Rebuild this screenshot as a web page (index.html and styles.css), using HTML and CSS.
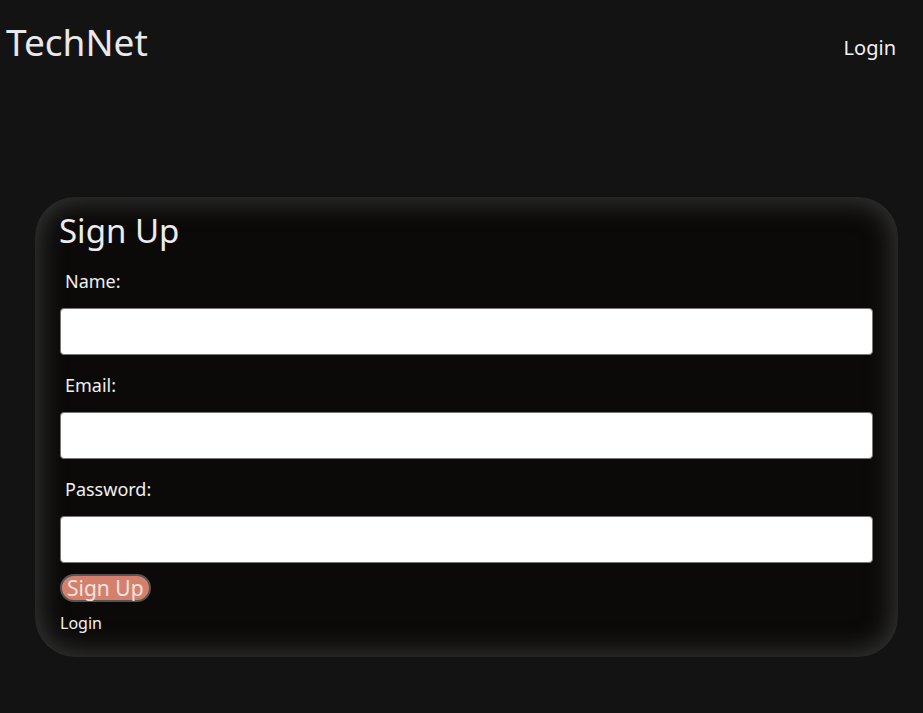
FILE: index.html
```html
<!DOCTYPE html>
<html>
<head>
<meta charset="utf-8">
<link rel="stylesheet" href="styles.css">
</head>
<body>
<header class="topbar">
  <div class="brand">TechNet</div>
  <nav class="nav"><a class="nav-link" href="#">Login</a></nav>
</header>
<main class="main">
  <form class="card">
    <h1 class="card-title">Sign Up</h1>
    <label class="field-label">Name:</label>
    <input class="field-input" type="text">
    <label class="field-label">Email:</label>
    <input class="field-input" type="email">
    <label class="field-label">Password:</label>
    <input class="field-input" type="password">
    <button class="submit" type="button">Sign Up</button>
    <a class="alt-link" href="#">Login</a>
  </form>
</main>
</body>
</html>
```
FILE: styles.css
```css
html, body {
  margin: 0;
  padding: 0;
  background: #131313;
  font-family: "Noto Sans", sans-serif;
  color: #ececec;
}
.topbar {
  display: flex;
  justify-content: space-between;
  align-items: flex-start;
  height: 197px;
}
.brand {
  font-size: 37px;
  line-height: 1;
  color: #e8e8ec;
  padding: 23px 0 0 6px;
}
.nav {
  padding: 34px 27px 0 0;
}
.nav-link {
  color: #f2f2f2;
  text-decoration: none;
  font-size: 20px;
}
.main {
  padding: 0 25px 0 35px;
}
.card {
  display: flex;
  flex-direction: column;
  align-items: flex-start;
  background: #0b0a09;
  border-radius: 40px;
  box-shadow: inset 0 0 26px 5px rgba(64, 64, 64, 0.8);
  padding: 14px 25px 0 25px;
  height: 460px;
  box-sizing: border-box;
}
.card > * {
  flex-shrink: 0;
}
.card-title {
  margin: 0 0 0 -1px;
  font-weight: normal;
  font-size: 33px;
  line-height: 40px;
  color: #ececf0;
}
.field-label {
  font-size: 18px;
  line-height: 22px;
  margin: 19px 0 0 5px;
  color: #f0f0f0;
}
.field-input {
  align-self: stretch;
  height: 47px;
  box-sizing: border-box;
  margin: 16px 0 0 0;
  border: 1px solid #777;
  border-radius: 4px;
  background: #fff;
}
.submit {
  margin-top: 11px;
  font-family: "Noto Sans", sans-serif;
  font-size: 21px;
  line-height: 24px;
  padding: 0 5px;
  background: #d4806c;
  color: #f3e4e0;
  border: 2px solid #555;
  border-radius: 14px;
}
.alt-link {
  margin-top: 10px;
  font-size: 16px;
  color: #f2f2f2;
  text-decoration: none;
}
```
